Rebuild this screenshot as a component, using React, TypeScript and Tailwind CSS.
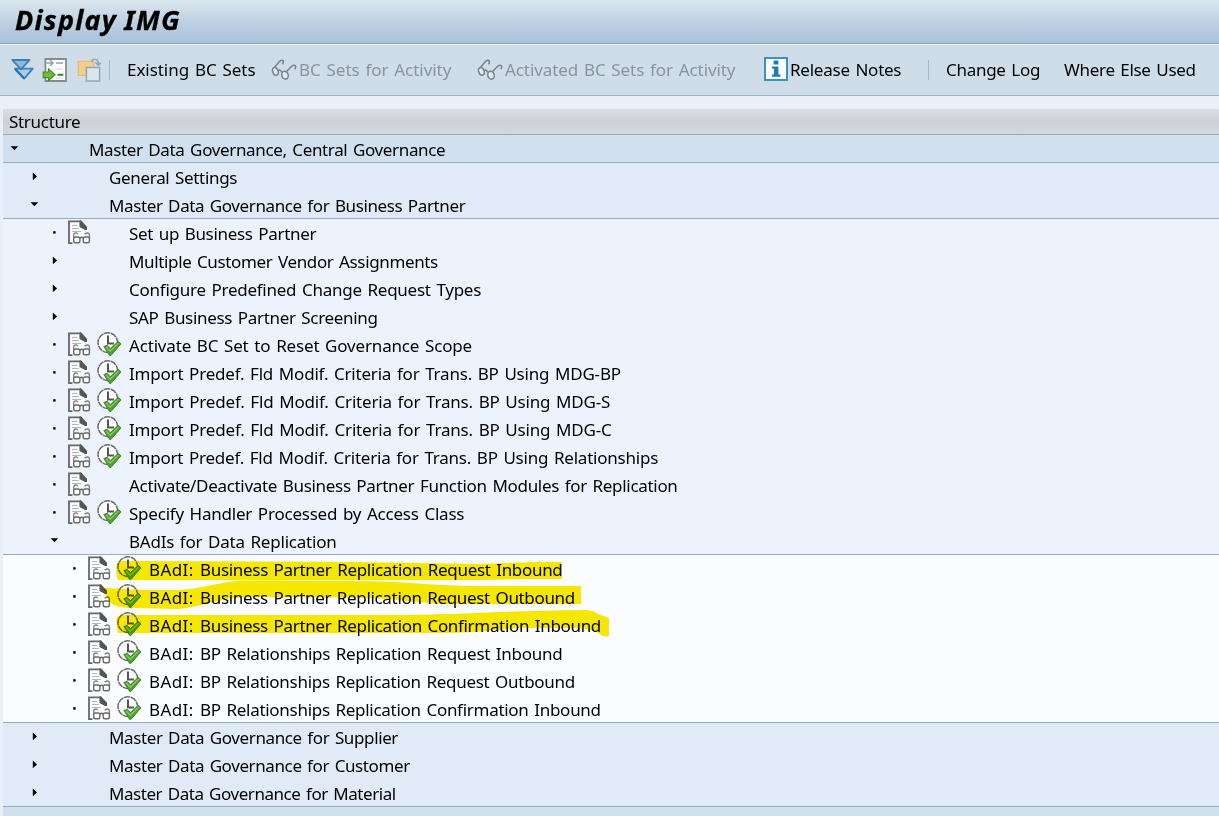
import React from "react";

type Row = {
  text: string;
  level: number;
  kind: "open" | "closed" | "leaf";
  track: string;
  doc?: boolean;
  run?: boolean;
  line?: boolean;
};

const rows: Row[] = [
  { text: "Master Data Governance, Central Governance", level: 0, kind: "open", track: "tracking-[-0.35px]", line: true },
  { text: "General Settings", level: 1, kind: "closed", track: "tracking-[-0.32px]" },
  { text: "Master Data Governance for Business Partner", level: 1, kind: "open", track: "tracking-[-0.38px]", line: true },
  { text: "Set up Business Partner", level: 2, kind: "leaf", track: "tracking-[-0.31px]", doc: true },
  { text: "Multiple Customer Vendor Assignments", level: 2, kind: "closed", track: "tracking-[-0.36px]" },
  { text: "Configure Predefined Change Request Types", level: 2, kind: "closed", track: "tracking-[-0.25px]" },
  { text: "SAP Business Partner Screening", level: 2, kind: "closed", track: "tracking-[-0.31px]" },
  { text: "Activate BC Set to Reset Governance Scope", level: 2, kind: "leaf", track: "tracking-[-0.17px]", doc: true, run: true },
  { text: "Import Predef. Fld Modif. Criteria for Trans. BP Using MDG-BP", level: 2, kind: "leaf", track: "tracking-[-0.2px]", doc: true, run: true },
  { text: "Import Predef. Fld Modif. Criteria for Trans. BP Using MDG-S", level: 2, kind: "leaf", track: "tracking-[-0.18px]", doc: true, run: true },
  { text: "Import Predef. Fld Modif. Criteria for Trans. BP Using MDG-C", level: 2, kind: "leaf", track: "tracking-[-0.18px]", doc: true, run: true },
  { text: "Import Predef. Fld Modif. Criteria for Trans. BP Using Relationships", level: 2, kind: "leaf", track: "tracking-[-0.22px]", doc: true, run: true },
  { text: "Activate/Deactivate Business Partner Function Modules for Replication", level: 2, kind: "leaf", track: "tracking-[-0.305px]", doc: true },
  { text: "Specify Handler Processed by Access Class", level: 2, kind: "leaf", track: "tracking-[-0.22px]", doc: true, run: true },
  { text: "BAdIs for Data Replication", level: 2, kind: "open", track: "tracking-[-0.22px]", line: true },
  { text: "BAdI: Business Partner Replication Request Inbound", level: 3, kind: "leaf", track: "tracking-[-0.31px]", doc: true, run: true },
  { text: "BAdI: Business Partner Replication Request Outbound", level: 3, kind: "leaf", track: "tracking-[-0.33px]", doc: true, run: true },
  { text: "BAdI: Business Partner Replication Confirmation Inbound", level: 3, kind: "leaf", track: "tracking-[-0.32px]", doc: true, run: true },
  { text: "BAdI: BP Relationships Replication Request Inbound", level: 3, kind: "leaf", track: "tracking-[-0.26px]", doc: true, run: true },
  { text: "BAdI: BP Relationships Replication Request Outbound", level: 3, kind: "leaf", track: "tracking-[-0.28px]", doc: true, run: true },
  { text: "BAdI: BP Relationships Replication Confirmation Inbound", level: 3, kind: "leaf", track: "tracking-[-0.28px]", doc: true, run: true, line: true },
  { text: "Master Data Governance for Supplier", level: 1, kind: "closed", track: "tracking-[-0.38px]" },
  { text: "Master Data Governance for Customer", level: 1, kind: "closed", track: "tracking-[-0.39px]" },
  { text: "Master Data Governance for Material", level: 1, kind: "closed", track: "tracking-[-0.44px]", line: true },
];

const levelBg = ["bg-[#d1e0ef]", "bg-[#e1ebf7]", "bg-[#edf3fc]", "bg-[#fafcff]"];
const levelPad = ["pl-[6px]", "pl-[26px]", "pl-[46px]", "pl-[66px]"];

function Marker({ kind }: { kind: Row["kind"] }) {
  return (
    <svg className="h-[27px] w-[11px] shrink-0" viewBox="0 0 11 27" fill="#000">
      {kind === "open" && <path d="M1.6 11.2H9.2L5.4 15.2Z" />}
      {kind === "closed" && <path d="M3.8 9.6L8 13.4L3.8 17.2Z" />}
      {kind === "leaf" && <rect x="4.2" y="12.2" width="2.4" height="2.4" />}
    </svg>
  );
}

function DocIcon() {
  return (
    <svg className="size-6 shrink-0" viewBox="0 0 24 24" fill="none">
      <path d="M1 1H13L19 8V22H1Z" fill="#fff" fillOpacity="0.6" />
      <path d="M4.5 23.1H1V1.4H13" stroke="#686868" strokeWidth="1.8" />
      <path d="M11.5 0.5H13.2L19 6.8V10H17L11.5 7Z" fill="#555" />
      <path d="M4 5.5H9M4 8.5H11M4 11.5H13" stroke="#b4b8bb" />
      <path d="M5.8 18V15Q5.8 12.8 8.4 13L10 14M21.4 18V15Q21.4 12.8 19 13L16.6 14" stroke="#858585" strokeWidth="1.4" />
      <rect x="5.7" y="17" width="6.2" height="5.8" rx="1.8" stroke="#6a6a6a" strokeWidth="1.4" fill="#fff" />
      <rect x="15.2" y="17" width="6.2" height="5.8" rx="1.8" stroke="#6a6a6a" strokeWidth="1.4" fill="#fff" />
      <path d="M11.8 18.2Q13.5 16.4 15.2 18.2" stroke="#6a6a6a" strokeWidth="1.4" />
    </svg>
  );
}

function RunIcon() {
  return (
    <svg className="size-6 shrink-0" viewBox="0 0 24 24" fill="none">
      <circle cx="10.8" cy="10.6" r="9.8" fill="#fff" fillOpacity="0.75" stroke="#6a6a6a" strokeWidth="1.5" strokeDasharray="6.4 0.6" />
      <path d="M11 3.6V11.6H17" stroke="#555" strokeWidth="2" />
      <path d="M6.8 14.6L10 13.2L13.4 16.6L21.2 9.4L24 11.8L14 23.4H12.6Z" fill="#4ba22d" stroke="#3c7d27" strokeWidth="0.9" />
      <path d="M9.2 15L13.2 19.2L21.6 11.2" stroke="#8ed169" strokeWidth="1.1" />
    </svg>
  );
}

function Glasses() {
  return (
    <svg className="h-6 w-[26px] shrink-0" viewBox="0 0 26 24" fill="none" stroke="#77828a" strokeWidth="1.5">
      <path d="M1.8 11.5L8.4 3.6Q11 1 12.4 3.2L11.8 6.4" />
      <path d="M15.6 13.6L20.4 8.6Q23.6 6 24.8 8.6L24 11.4" />
      <ellipse cx="4.4" cy="13.4" rx="2.7" ry="4" fill="#e3ebf1" transform="rotate(-20 4.4 13.4)" />
      <ellipse cx="14" cy="17.2" rx="3.2" ry="4" fill="#e3ebf1" transform="rotate(-15 14 17.2)" />
      <path d="M7 12.6Q9.6 11 11 14.6" />
    </svg>
  );
}

const textCls = "whitespace-nowrap text-[17px] [word-spacing:1.5px]";

function ToolText({ children, cls }: { children: string; cls: string }) {
  return <span className={`${textCls} shrink-0 leading-[27px] ${cls}`}>{children}</span>;
}

function Separator({ cls }: { cls: string }) {
  return <span className={`h-5 w-px shrink-0 bg-[#a3b8ca] ${cls}`} />;
}

function RowText({ text }: { text: string }) {
  if (!text.startsWith("BAdI:")) return <>{text}</>;
  return (
    <>
      <span className="tracking-[0.4px]">BAdI: </span>
      {text.slice(6)}
    </>
  );
}

function Highlights() {
  return (
    <svg className="pointer-events-none absolute left-[100px] top-[555px] mix-blend-multiply" width="520" height="90" viewBox="100 555 520 90" fill="#faea00">
      <path d="M117 563L122 561L350 562L480 564L535 562H562V579H530L480 580H118Q115 571 117 563Z" />
      <path d="M104 588L145 590L180 590C205 588 220 582 242 580.5L350 581C400 581 440 586 475 586H581V604H450C420 604 400 598 350 597.5L245 597C215 599 205 606 178 609L135 608C112 608 107 603 104 588Z" />
      <path d="M117 617L122 615H400C450 615 500 611 585 610Q593 610 598 614L609 618V636Q604 638 598 633Q592 628 570 628H530C500 628 490 633 440 633H118Q116 625 117 617Z" />
    </svg>
  );
}

export default function App() {
  return (
    <div className="relative flex h-[816px] w-[1219px] flex-col overflow-hidden bg-[#e8eff6] font-['Noto_Sans',sans-serif] text-black">
      <header className="flex h-[44px] shrink-0 items-start border-b border-[#8fa6bd] bg-linear-to-b from-[#dbe6ef] via-[#bfd1e2] to-[#a9c1da] pl-[15px]">
        <h1 className="whitespace-nowrap text-[27px] font-bold italic leading-[39px] tracking-[1.25px] [-webkit-text-stroke:0.3px_#000] [word-spacing:-1px]">Display IMG</h1>
      </header>

      <nav className="flex h-[52px] shrink-0 items-center border-b border-t border-b-[#9fb4c6] border-t-[#eef4f9] bg-[#cfdde9] pl-[10px] pb-px">
        <svg className="h-6 w-[26px] shrink-0" viewBox="0 0 26 24" strokeLinejoin="round">
          <path d="M5 10.6H22.8L14.2 20.6Z" fill="#a9cbe6" stroke="#3a7fb5" strokeWidth="1.8" />
          <path d="M2.2 2H19.6L11 11.4Z" fill="#8db8dc" stroke="#3a7fb5" strokeWidth="1.8" />
          <path d="M5 11L14.2 20.4" stroke="#2f75ad" strokeWidth="2.2" />
        </svg>
        <svg className="ml-[6px] h-6 w-[26px] shrink-0" viewBox="0 0 26 24" fill="none">
          <path d="M3.4 1H24V23H3.4Z" fill="#fdfdfd" stroke="#838b90" strokeWidth="1.8" />
          <path d="M4 5H10M8 2.2L11 5L8 8" stroke="#9ba2a7" strokeWidth="1.6" />
          <path d="M14 5H21" stroke="#a9afb3" strokeWidth="1.8" />
          <path d="M13 11H21M14 20H21" stroke="#e0e3e5" strokeWidth="1.4" />
          <path d="M15.5 16.8H21.4" stroke="#3b9434" strokeWidth="2.2" />
          <path d="M1.2 14H6.5V10.8L13 16.8L6.5 22.6V19.6H1.2Z" fill="#6cbf35" stroke="#468c2c" strokeWidth="1.2" />
        </svg>
        <svg className="ml-[9px] h-6 w-6 shrink-0" viewBox="0 0 24 24" fill="none">
          <path d="M1.4 3.4H16.6V17.4H1.4Z" fill="#f0cf8b" stroke="#e2bf80" strokeWidth="1.4" />
          <path d="M14.5 4Q15 1.2 18 1.2Q21.5 1.2 21.5 6.5M18.4 4.4L21.5 7.4L23.6 4.8" stroke="#9aa4ab" strokeWidth="1.6" />
          <path d="M9.4 9.4H22.6V23H9.4Z" fill="#dde5ec" stroke="#9ba5ad" strokeWidth="1.5" />
        </svg>
        <Separator cls="ml-[8px]" />
        <ToolText cls="ml-[17px] w-[144px] tracking-[-0.05px]">Existing BC Sets</ToolText>
        <Glasses />
        <ToolText cls="ml-[2px] w-[178px] tracking-[-0.05px] text-[#8a949c]">BC Sets for Activity</ToolText>
        <Glasses />
        <ToolText cls="ml-[2px] w-[259px] tracking-[-0.09px] text-[#8a949c]">Activated BC Sets for Activity</ToolText>
        <svg className="-mt-px h-6 w-6 shrink-0" viewBox="0 0 24 24">
          <path d="M1 1H23V23H1Z" fill="#fff" stroke="#3a8fc6" strokeWidth="2" />
          <path d="M9.6 3.6H14.4V7.4H9.6ZM8 9.6H14.4V17.6H16.4V19.8H8V17.6H10V11.8H8Z" fill="#1f7db5" />
        </svg>
        <ToolText cls="ml-[2px] w-[138px] tracking-[-0.24px]">Release Notes</ToolText>
        <Separator cls="" />
        <ToolText cls="ml-[17px] w-[118px] tracking-[-0.28px]">Change Log</ToolText>
        <ToolText cls="tracking-[-0.3px]">Where Else Used</ToolText>
      </nav>

      <main className="flex grow flex-col bg-[#e8eff6] pl-[3px] pt-[13px]">
        <div className="flex h-[26px] shrink-0 items-start border-b border-[#9aa7b5] bg-linear-to-b from-[#dadee1] via-[#cdd1d7] to-[#d3d8dd] pl-[6px]">
          <span className={`${textCls} leading-[25px] tracking-[-0.3px]`}>Structure</span>
        </div>
        {rows.map((r) => (
          <div
            key={r.text}
            className={`flex h-[28px] shrink-0 items-start border-b ${levelBg[r.level]} ${levelPad[r.level]} ${r.line ? "border-[#97abc2]" : "border-transparent"}`}
          >
            <Marker kind={r.kind} />
            <span className="mt-px flex h-6 w-[69px] shrink-0 gap-[5px] pl-[8px]">
              {r.doc && <DocIcon />}
              {r.run && <RunIcon />}
            </span>
            <span className={`${textCls} leading-[29px] ${r.track}`}>
              <RowText text={r.text} />
            </span>
          </div>
        ))}
        <div className="grow bg-[#d1e0ef]" />
      </main>
      <Highlights />
    </div>
  );
}
